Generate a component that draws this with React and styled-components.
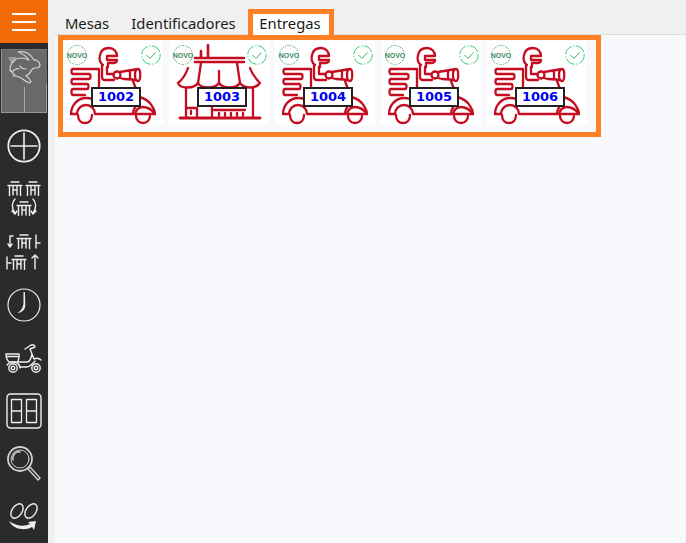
import React from 'react';
import styled, { createGlobalStyle } from 'styled-components';

const Global = createGlobalStyle`
  html, body { margin: 0; padding: 0; height: 100%; overflow: hidden; background: #f8f9fc; }
  #root { height: 100%; }
`;

const Page = styled.div`
  display: flex;
  width: 686px;
  height: 543px;
  font-family: "Noto Sans", "Liberation Sans", sans-serif;
`;

const Rail = styled.aside`
  width: 48px;
  flex: none;
  display: flex;
  flex-direction: column;
  background: #2b2b2b;
`;

const Burger = styled.div`
  height: 43px;
  background: #f26a05;
  display: flex;
  flex-direction: column;
  align-items: center;
  justify-content: center;
  gap: 6px;
  span {
    width: 24px;
    height: 2px;
    background: #fff;
  }
`;

const LogoTile = styled.div`
  height: 64px;
  margin: 6px 1px 6px 1px;
  background: #696969;
  box-shadow: inset 1px 0 0 #949494, inset 0 -1px 0 #949494, inset 0 1px 0 #7a7a7a;
  position: relative;
  svg { display: block; }
  &::before {
    content: "";
    position: absolute;
    right: 0;
    top: 35px;
    bottom: 0;
    width: 1px;
    background: #a0a0a0;
  }
  &::after {
    content: "";
    position: absolute;
    left: 23px;
    top: 38px;
    bottom: 0;
    width: 1px;
    background: #a8a8a8;
  }
`;

const RailButton = styled.div`
  height: 53px;
  flex: none;
  display: flex;
  align-items: center;
  justify-content: center;
`;

const Gutter = styled.div`
  width: 7px;
  flex: none;
  background: #f0f0f0;
`;

const Main = styled.main`
  flex: 1;
  display: flex;
  flex-direction: column;
  min-width: 0;
`;

const TabBar = styled.nav`
  height: 35px;
  box-sizing: border-box;
  background: #f0f0f0;
  border-bottom: 1px solid #dcdcdc;
  display: flex;
  align-items: flex-end;
  padding-left: 3px;
`;

const Tab = styled.div`
  box-sizing: border-box;
  height: ${p => (p.$active ? '26px' : '21px')};
  margin-bottom: ${p => (p.$active ? '-1px' : '0')};
  width: ${p => p.$w}px;
  padding-left: ${p => p.$pl || 0}px;
  padding-right: ${p => p.$pr || 0}px;
  font-size: 14.8px;
  line-height: ${p => (p.$active ? '19px' : '21px')};
  color: #1a1a1a;
  text-align: center;
  background: ${p => (p.$active ? '#fff' : 'transparent')};
  border: ${p => (p.$active ? '5px solid #ff7f27' : '0')};
  border-bottom: 0;
`;

const Panel = styled.section`
  box-sizing: border-box;
  width: 543px;
  height: 102px;
  margin-left: 3px;
  border: 5px solid #ff7f27;
  padding: 1px 0 7px;
  display: flex;
  gap: 6px;
`;

const Card = styled.div`
  position: relative;
  width: 100px;
  height: 84px;
  flex: none;
  background: #fff;
  svg { display: block; }
`;

const Novo = styled.div`
  position: absolute;
  left: 4px;
  top: 4px;
  box-sizing: border-box;
  width: 20px;
  height: 20px;
  border: 1.5px dotted #2f9e63;
  border-radius: 50%;
  display: flex;
  align-items: center;
  justify-content: center;
  font-family: "Liberation Sans", sans-serif;
  font-size: 7px;
  font-weight: 700;
  color: #3d8a63;
`;

const Done = styled.div`
  position: absolute;
  left: 78px;
  top: 4px;
  svg { display: block; }
`;

const Tag = styled.div`
  position: absolute;
  left: 28px;
  top: 46px;
  box-sizing: border-box;
  width: 50px;
  height: 20px;
  background: #fff;
  border: 2px solid #222;
  text-align: center;
  font-family: "DejaVu Sans", sans-serif;
  font-size: 13px;
  font-weight: 700;
  line-height: 16px;
  color: #0000f0;
`;

const ice = { fill: 'none', stroke: '#eeeeee', strokeWidth: 1.4, strokeLinecap: 'round', strokeLinejoin: 'round' };
const red = { fill: 'none', stroke: '#c40d20', strokeWidth: 2.3, strokeLinecap: 'round', strokeLinejoin: 'round' };

const Rabbit = () => (
  <svg width="46" height="36" viewBox="1 49 46 36">
    <g {...ice} stroke="#d4d4d4" strokeWidth="1.2">
      <path d="M9 58h7M10 60h5M11 62h3" />
      <path d="M10 70c0-7 5-12 11-12 3 0 6 1 8 2-2-3-6-6-11-8 5-1 10 1 13 4l3 4c3 0 6 2 6 5 0 2-2 3-5 3-2 0-3 1-4 3-1 3-3 4-5 5 2 1 4 3 5 6l-2 1c-4-2-7-5-10-6-2-1-5-1-6-1" />
      <path d="M10 70c0 1 1 2 3 1 2-2 4-3 6-2M15 75c-2-1-3-3-4-4M20 66c1 2 3 3 6 3M35 60h1" />
    </g>
  </svg>
);

const Plus = () => (
  <svg width="34" height="34" viewBox="0 0 34 34">
    <circle {...ice} cx="17" cy="17" r="15.7" strokeWidth="1.8" />
    <path {...ice} strokeWidth="1.6" d="M17 4v26M4 17h26" />
  </svg>
);

const MiniTable = ({ x, y }) => (
  <path {...ice} transform={`translate(${x} ${y})`} d="M3 0h8M0 3.5h14M1.5 3.5v10M12.5 3.5v10M5 4v9M9 4v9M5 8h4" />
);

const TablesSwap = () => (
  <svg width="36" height="36" viewBox="0 0 36 36">
    <MiniTable x={2} y={1} />
    <MiniTable x={20} y={1} />
    <MiniTable x={11} y={21} />
    <path {...ice} d="M9 18c-3 3-4 9 0 14M6 30l3 3 2-3M27 18c3 3 4 9 0 14M30 30l-3 3-2-3" />
  </svg>
);

const TablesMove = () => (
  <svg width="36" height="36" viewBox="0 0 36 36">
    <MiniTable x={11} y={1} />
    <MiniTable x={6} y={22} />
    <path {...ice} d="M7 2H4v11M2 10l2 3 2-3M30 1v13M34 9h-4M29 35V21M26 24l3-3 3 3M1 23v12M1 29h4" />
  </svg>
);

const Clock = () => (
  <svg width="34" height="34" viewBox="0 0 34 34">
    <circle {...ice} cx="17" cy="17" r="16" strokeWidth="1.2" />
    <path fill="#eeeeee" d="M16.5 4h1.4l.4 12c0 3-.6 5-1.6 6-1.4 1.600-3.500 2.700-6 3 1.800-1.400 3.400-3 4.600-5 1-2 1.400-5 1.200-8z" />
  </svg>
);

const Moto = () => (
  <svg width="38" height="30" viewBox="0 0 38 30">
    <g {...ice}>
      <path d="M1 11h13v3l-1 5H4c-2-2-3-5-3-8zM1 13.500h13" />
      <path d="M20 6l6-4h3l1 2-5 2M25 6l4 10c2-1 5-1 7 1M30 18c-3 3-5 6-8 6h-7M14 19h8c2 0 4-3 5-8" />
      <path d="M2 22c2-3 7-4 10-2 2 1 3 3 3 5" />
    </g>
    <circle {...ice} cx="8" cy="25" r="4.200" />
    <circle {...ice} cx="8" cy="25" r="1.800" />
    <circle {...ice} cx="31" cy="25" r="4.200" />
    <circle {...ice} cx="31" cy="25" r="1.800" />
  </svg>
);

const Segments = () => (
  <svg width="36" height="36" viewBox="0 0 36 36">
    <rect {...ice} x="1" y="1" width="34" height="34" rx="3.500" />
    <g {...ice} strokeWidth="1.3">
      <path d="M5.500 6.500h10v23h-10zM5.500 18h10" />
      <path d="M20.500 6.500h10v23h-10zM20.500 18h10" />
    </g>
  </svg>
);

const Lens = () => (
  <svg width="34" height="36" viewBox="0 0 34 36">
    <circle {...ice} stroke="#cfcfcf" cx="13" cy="13" r="12" strokeWidth="1.800" />
    <circle {...ice} stroke="#cfcfcf" cx="13" cy="13" r="9" strokeWidth="1" />
    <path {...ice} stroke="#cfcfcf" d="M6 14c-1-5 3-9 7-8" />
    <path {...ice} stroke="#cfcfcf" d="M21 23l10 11 2-2-10-11z" />
  </svg>
);

const Delivery = () => (
  <svg width="32" height="28" viewBox="0 0 32 28">
    <ellipse {...ice} cx="9" cy="8" rx="5" ry="8" transform="rotate(35 9 8)" />
    <ellipse {...ice} cx="23" cy="8" rx="5" ry="8" transform="rotate(35 23 8)" />
    <path fill="#eeeeee" d="M1 18c7 5 15 6 21 3l-2-2 8-1-2 9-2-3c-7 4-18 3-23-6z" />
  </svg>
);

const Scooter = () => (
  <svg width="100" height="84" viewBox="0 0 100 84">
    <g {...red}>
      <path d="M40 24c-3-2-4-6-3-10 1-5 5-7 9-7 5 0 8 4 8 8H44v4h10c0 2-2 3-4 3h-5v4" />
      <path d="M39 25v11c0 2 1 3 3 3h9M44 26v7h6" />
      <circle cx="54" cy="34" r="3.500" />
      <path d="M57 31l18-3M57 37l4 1c4 0 9 0 14 2M75 28c3 0 3 12 0 12-2 0-3-3-3-6s1-6 3-6zM67 30v8" />
      <path d="M36 46V28H10c-2 0-2 5 0 5h16c2 0 2 5 0 5H10c-2 0-2 5 0 5h14c2 0 2 5 0 5H10c-2 0-2 6 0 6h12" />
      <path d="M70 40l6 16c5 1 10 4 13 9 2 3 3 6 3 8H70c0-4 2-7 4-10" />
      <path d="M8 73c0-9 7-16 15-16 2 0 4 0 6 1M14 73c0-5 4-9 9-9s9 4 9 9M32 73h38" />
      <path d="M8 73h6M72 73c1-4 4-7 8-7 5 0 9 3 12 7" />
      <path d="M15 74c0 5 3 8 7 8s7-3 7-8M73 75c0 4 3 7 7 7s7-3 7-7" />
    </g>
  </svg>
);

const Shop = () => (
  <svg width="100" height="84" viewBox="0 0 100 84">
    <g {...red}>
      <path d="M39 4v13M32 10v7M26 17h49M26 21h49" strokeWidth="2.600" />
      <path d="M19 27c-2 6-5 11-10 15 2 6 16 6 20 0 3 6 17 6 21 0 4 6 17 6 21 0 4 6 16 6 20 0-4-4-8-9-10-15" />
      <path d="M32 22l-3 20M68 22l3 20M50 30v12" />
      <path d="M17 47v29M84 47v29M17 67h11v9M22 70v3M43 60v16M45 69h31M50 72v3M56 72v3M62 72v3M68 72v3M74 72v3" />
      <path d="M11 77h80" strokeWidth="2.800" />
    </g>
  </svg>
);

const Tick = () => (
  <svg width="20" height="20" viewBox="0 0 20 20">
    <circle cx="10" cy="10" r="9.200" fill="none" stroke="#2ecc71" strokeWidth="1" strokeDasharray="10 1.800 1.200 1.800" />
    <path d="M5.500 10l3.500 3.500 5.500-6" fill="none" stroke="#2bb56a" strokeWidth="1" />
  </svg>
);

const railIcons = [Plus, TablesSwap, TablesMove, Clock, Moto, Segments, Lens, Delivery];

const orders = [
  { id: 1002, Art: Scooter },
  { id: 1003, Art: Shop },
  { id: 1004, Art: Scooter },
  { id: 1005, Art: Scooter },
  { id: 1006, Art: Scooter }
];

const App = () => (
  <>
    <Global />
    <Page>
      <Rail>
        <Burger><span /><span /><span /></Burger>
        <LogoTile><Rabbit /></LogoTile>
        {railIcons.map((Icon, i) => (
          <RailButton key={i}><Icon /></RailButton>
        ))}
      </Rail>
      <Gutter />
      <Main>
        <TabBar>
          <Tab $w={57} $pl={1}>Mesas</Tab>
          <Tab $w={133} $pl={4}>Identificadores</Tab>
          <Tab $w={86} $pr={2} $active>Entregas</Tab>
        </TabBar>
        <Panel>
          {orders.map(({ id, Art }) => (
            <Card key={id}>
              <Art />
              <Novo>NOVO</Novo>
              <Done><Tick /></Done>
              <Tag>{id}</Tag>
            </Card>
          ))}
        </Panel>
      </Main>
    </Page>
  </>
);

export default App;
